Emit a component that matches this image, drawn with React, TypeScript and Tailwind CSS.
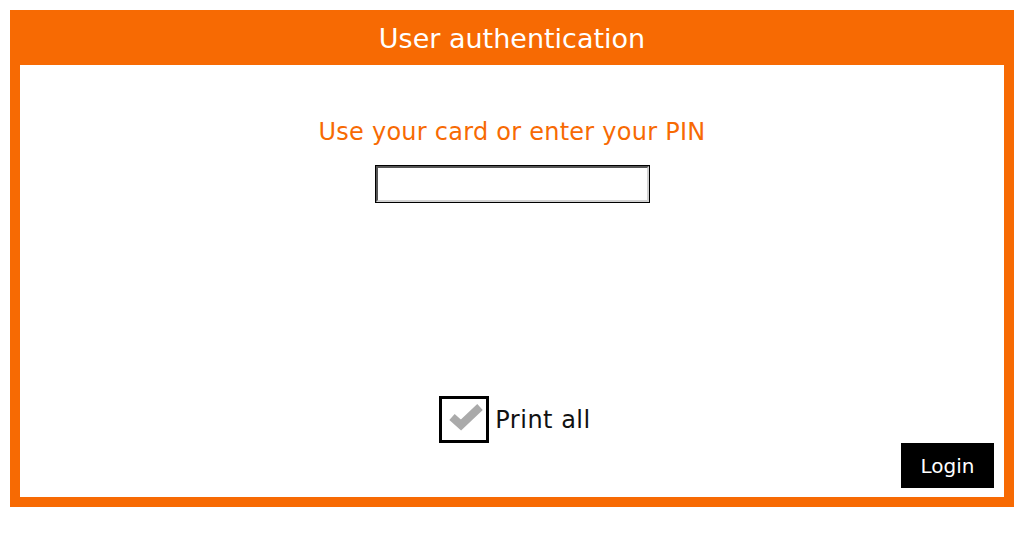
export default function App() {
  return (
    <div className="w-full h-[544px] bg-white p-[10px]" style={{ fontFamily: '"DejaVu Sans", sans-serif' }}>
      <div className="w-[1004px] h-[497px] bg-[#f76a03] flex flex-col px-[10px] pb-[10px]">
        {/* Header */}
        <div className="h-[55px] flex items-center justify-center">
          <h1 className="text-white text-[27px] leading-none mt-[2px]">User authentication</h1>
        </div>

        {/* Body */}
        <div className="flex-1 bg-white flex flex-col items-center pt-[52px] pb-[9px]">
          <p className="text-[#f76a03] text-[24px] leading-[30px] tracking-[0.25px]">Use your card or enter your PIN</p>
          <div className="mt-[18px] border border-black">
            <input
              type="text"
              className="block w-[273px] h-[36px] bg-white border-2 border-t-[#555] border-l-[#555] border-b-[#d2d2d2] border-r-[#d2d2d2] outline-none"
            />
          </div>

          <div className="flex-1" />

          <label className="flex items-center gap-[6px] ml-[6px]">
            <span className="w-[50px] h-[47px] border-[3px] border-black flex items-center justify-center">
              <svg width="44" height="41" viewBox="0 0 44 41">
                <polyline points="10,18 19,26 38,8" fill="none" stroke="#aaaaaa" strokeWidth="8" strokeLinejoin="miter" />
              </svg>
            </span>
            <span className="text-[24px] text-[#111] tracking-[0.5px]">Print all</span>
          </label>

          <div className="w-full flex justify-end pr-[10px]">
            <button className="w-[93px] h-[45px] bg-black text-white text-[20px]">Login</button>
          </div>
        </div>
      </div>
    </div>
  );
}
